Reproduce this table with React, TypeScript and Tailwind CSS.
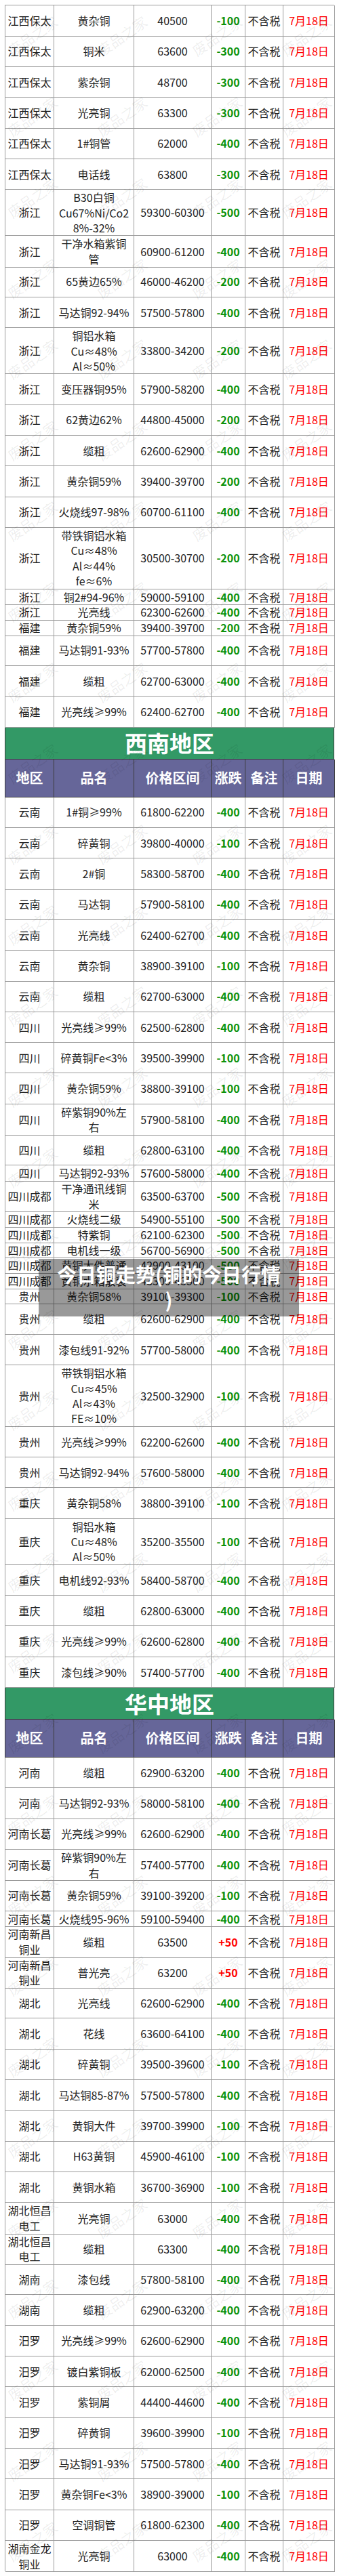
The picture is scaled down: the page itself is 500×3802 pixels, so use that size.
import React from "react";

type Row = [string, string, string, string, number];

const H: Record<number, string> = {
  1: "h-[22.67px]",
  2: "h-[45.33px]",
  3: "h-[68px]",
  4: "h-[90.67px]",
};

const sec1: Row[] = [
  ["江西保太", "黄杂铜", "40500", "-100", 2],
  ["江西保太", "铜米", "63600", "-300", 2],
  ["江西保太", "紫杂铜", "48700", "-300", 2],
  ["江西保太", "光亮铜", "63300", "-300", 2],
  ["江西保太", "1#铜管", "62000", "-400", 2],
  ["江西保太", "电话线", "63800", "-300", 2],
  ["浙江", "B30白铜\nCu67%Ni/Co2\n8%-32%", "59300-60300", "-500", 3],
  ["浙江", "干净水箱紫铜\n管", "60900-61200", "-400", 2],
  ["浙江", "65黄边65%", "46000-46200", "-200", 2],
  ["浙江", "马达铜92-94%", "57500-57800", "-400", 2],
  ["浙江", "铜铝水箱\nCu≈48%\nAl≈50%", "33800-34200", "-200", 3],
  ["浙江", "变压器铜95%", "57900-58200", "-400", 2],
  ["浙江", "62黄边62%", "44800-45000", "-200", 2],
  ["浙江", "缆粗", "62600-62900", "-400", 2],
  ["浙江", "黄杂铜59%", "39400-39700", "-200", 2],
  ["浙江", "火烧线97-98%", "60700-61100", "-400", 2],
  ["浙江", "带铁铜铝水箱\nCu≈48%\nAl≈44%\nfe≈6%", "30500-30700", "-200", 4],
  ["浙江", "铜2#94-96%", "59000-59100", "-400", 1],
  ["浙江", "光亮线", "62300-62600", "-400", 1],
  ["福建", "黄杂铜59%", "39400-39700", "-200", 1],
  ["福建", "马达铜91-93%", "57700-57800", "-400", 2],
  ["福建", "缆粗", "62700-63000", "-400", 2],
  ["福建", "光亮线≥99%", "62400-62700", "-400", 2],
];

const sec2: Row[] = [
  ["云南", "1#铜≥99%", "61800-62200", "-400", 2],
  ["云南", "碎黄铜", "39800-40000", "-100", 2],
  ["云南", "2#铜", "58300-58700", "-400", 2],
  ["云南", "马达铜", "57900-58100", "-400", 2],
  ["云南", "光亮线", "62400-62700", "-400", 2],
  ["云南", "黄杂铜", "38900-39100", "-100", 2],
  ["云南", "缆粗", "62700-63000", "-400", 2],
  ["四川", "光亮线≥99%", "62500-62800", "-400", 2],
  ["四川", "碎黄铜Fe<3%", "39500-39900", "-100", 2],
  ["四川", "黄杂铜59%", "38800-39100", "-100", 2],
  ["四川", "碎紫铜90%左\n右", "57900-58100", "-400", 2],
  ["四川", "缆粗", "62800-63100", "-400", 2],
  ["四川", "马达铜92-93%", "57600-58000", "-400", 1],
  ["四川成都", "干净通讯线铜\n米", "63500-63700", "-500", 2],
  ["四川成都", "火烧线二级", "54900-55100", "-500", 1],
  ["四川成都", "特紫铜", "62100-62300", "-500", 1],
  ["四川成都", "电机线一级", "56700-56900", "-500", 1],
  ["四川成都", "黄铜大件普通", "42900-43100", "-500", 1],
  ["四川成都", "黄铜水箱散装", "43300-43500", "-500", 1],
  ["贵州", "黄杂铜58%", "39100-39300", "-100", 1],
  ["贵州", "缆粗", "62600-62900", "-400", 2],
  ["贵州", "漆包线91-92%", "57700-58000", "-400", 2],
  ["贵州", "带铁铜铝水箱\nCu≈45%\nAl≈43%\nFE≈10%", "32500-32900", "-100", 4],
  ["贵州", "光亮线≥99%", "62200-62600", "-400", 2],
  ["贵州", "马达铜92-94%", "57600-58000", "-400", 2],
  ["重庆", "黄杂铜58%", "38800-39100", "-100", 2],
  ["重庆", "铜铝水箱\nCu≈48%\nAl≈50%", "35200-35500", "-100", 3],
  ["重庆", "电机线92-93%", "58400-58700", "-400", 2],
  ["重庆", "缆粗", "62800-63000", "-400", 2],
  ["重庆", "光亮线≥99%", "62600-62800", "-400", 2],
  ["重庆", "漆包线≥90%", "57400-57700", "-400", 2],
];

const sec3: Row[] = [
  ["河南", "缆粗", "62900-63200", "-400", 2],
  ["河南", "马达铜92-93%", "58000-58100", "-400", 2],
  ["河南长葛", "光亮线≥99%", "62600-62900", "-400", 2],
  ["河南长葛", "碎紫铜90%左\n右", "57400-57700", "-400", 2],
  ["河南长葛", "黄杂铜59%", "39100-39200", "-100", 2],
  ["河南长葛", "火烧线95-96%", "59100-59400", "-400", 1],
  ["河南新昌\n铜业", "缆粗", "63500", "+50", 2],
  ["河南新昌\n铜业", "普光亮", "63200", "+50", 2],
  ["湖北", "光亮线", "62600-62900", "-400", 2],
  ["湖北", "花线", "63600-64100", "-400", 2],
  ["湖北", "碎黄铜", "39500-39600", "-100", 2],
  ["湖北", "马达铜85-87%", "57500-57800", "-400", 2],
  ["湖北", "黄铜大件", "39700-39900", "-100", 2],
  ["湖北", "H63黄铜", "45900-46100", "-100", 2],
  ["湖北", "黄铜水箱", "36700-36900", "-100", 2],
  ["湖北恒昌\n电工", "光亮铜", "63000", "-400", 2],
  ["湖北恒昌\n电工", "缆粗", "63300", "-400", 2],
  ["湖南", "漆包线", "57800-58100", "-400", 2],
  ["湖南", "缆粗", "62900-63200", "-400", 2],
  ["汨罗", "光亮线≥99%", "62600-62900", "-400", 2],
  ["汨罗", "镀白紫铜板", "62000-62500", "-400", 2],
  ["汨罗", "紫铜屑", "44400-44600", "-400", 2],
  ["汨罗", "碎黄铜", "39600-39900", "-100", 2],
  ["汨罗", "马达铜91-93%", "57500-57800", "-400", 2],
  ["汨罗", "黄杂铜Fe<3%", "38900-39000", "-100", 2],
  ["汨罗", "空调铜管", "61800-62300", "-400", 2],
  ["湖南金龙\n铜业", "光亮铜", "63000", "-400", 2],
];

const GRID = "grid grid-cols-[72px_118px_114px_50px_56px_76px]";
const CELL =
  "flex flex-col items-center justify-center border-r border-b border-[#9a9a9a] whitespace-nowrap";

function Lines({ text }: { text: string }) {
  const ls = text.split("\n");
  return (
    <>
      {ls.map((l, i) => (
        <div key={i} className={ls.length > 2 ? "leading-[22.3px]" : ""}>
          {l}
        </div>
      ))}
    </>
  );
}

function DataRow({ row }: { row: Row }) {
  const [region, product, price, chg, u] = row;
  const up = chg.startsWith("+");
  return (
    <div className={`${GRID} ${H[u]} border-l border-[#9a9a9a]`}>
      <div className={CELL}>
        <Lines text={region} />
      </div>
      <div className={CELL}>
        <Lines text={product} />
      </div>
      <div className={CELL}>{price}</div>
      <div className={`${CELL} font-bold ${up ? "text-[#ff0000]" : "text-[#0b920b]"}`}>{chg}</div>
      <div className={CELL}>不含税</div>
      <div className={`${CELL} text-[#ff0000]`}>7月18日</div>
    </div>
  );
}

function Section({ title }: { title: string }) {
  const heads = ["地区", "品名", "价格区间", "涨跌", "备注", "日期"];
  return (
    <>
      <div className="h-[47px] flex items-center justify-center bg-[#339966] border-x border-b border-[#3a3a3a] text-white text-[33px] font-bold leading-none">
        {title}
      </div>
      <div className={`${GRID} h-[56px] bg-[#666699] border-l border-[#3a3a3a]`}>
        {heads.map((h) => (
          <div
            key={h}
            className="flex items-center justify-center border-r border-b border-[#3a3a3a] text-white text-[20px] font-bold whitespace-nowrap"
          >
            {h}
          </div>
        ))}
      </div>
    </>
  );
}

export default function App() {
  const marks: { x: number; y: number }[] = [];
  for (let k = 0; k < 32; k++) {
    for (const x of [48, 180, 320, 452]) {
      marks.push({ x, y: 53 + k * 119.3 });
    }
  }
  return (
    <div className="relative w-[500px] min-h-[3802px] bg-white pt-[7.33px] px-[7px] overflow-hidden font-['Noto_Sans_CJK_SC','Noto_Sans',sans-serif] text-[16px] leading-[22.67px] text-[#222222]">
      <div className="w-[486px] border-t border-[#9a9a9a]">
        {sec1.map((r, i) => (
          <DataRow key={i} row={r} />
        ))}
        <Section title="西南地区" />
        {sec2.map((r, i) => (
          <DataRow key={i} row={r} />
        ))}
        <Section title="华中地区" />
        {sec3.map((r, i) => (
          <DataRow key={i} row={r} />
        ))}
      </div>

      <div className="pointer-events-none absolute inset-0">
        {marks.map((m, i) => (
          <span
            key={i}
            className="absolute -translate-x-1/2 -translate-y-1/2 -rotate-[35deg] whitespace-nowrap text-[21px] leading-none text-black/[0.08]"
            style={{ left: m.x, top: m.y }}
          >
            废品之家
          </span>
        ))}
      </div>

      <div className="absolute left-[57px] top-[1858px] w-[384px] h-[85px] bg-black/40 pt-[4px] text-center text-white text-[29px] font-bold leading-[37px]">
        今日铜走势(铜的今日行情
        <br />)
      </div>
    </div>
  );
}
